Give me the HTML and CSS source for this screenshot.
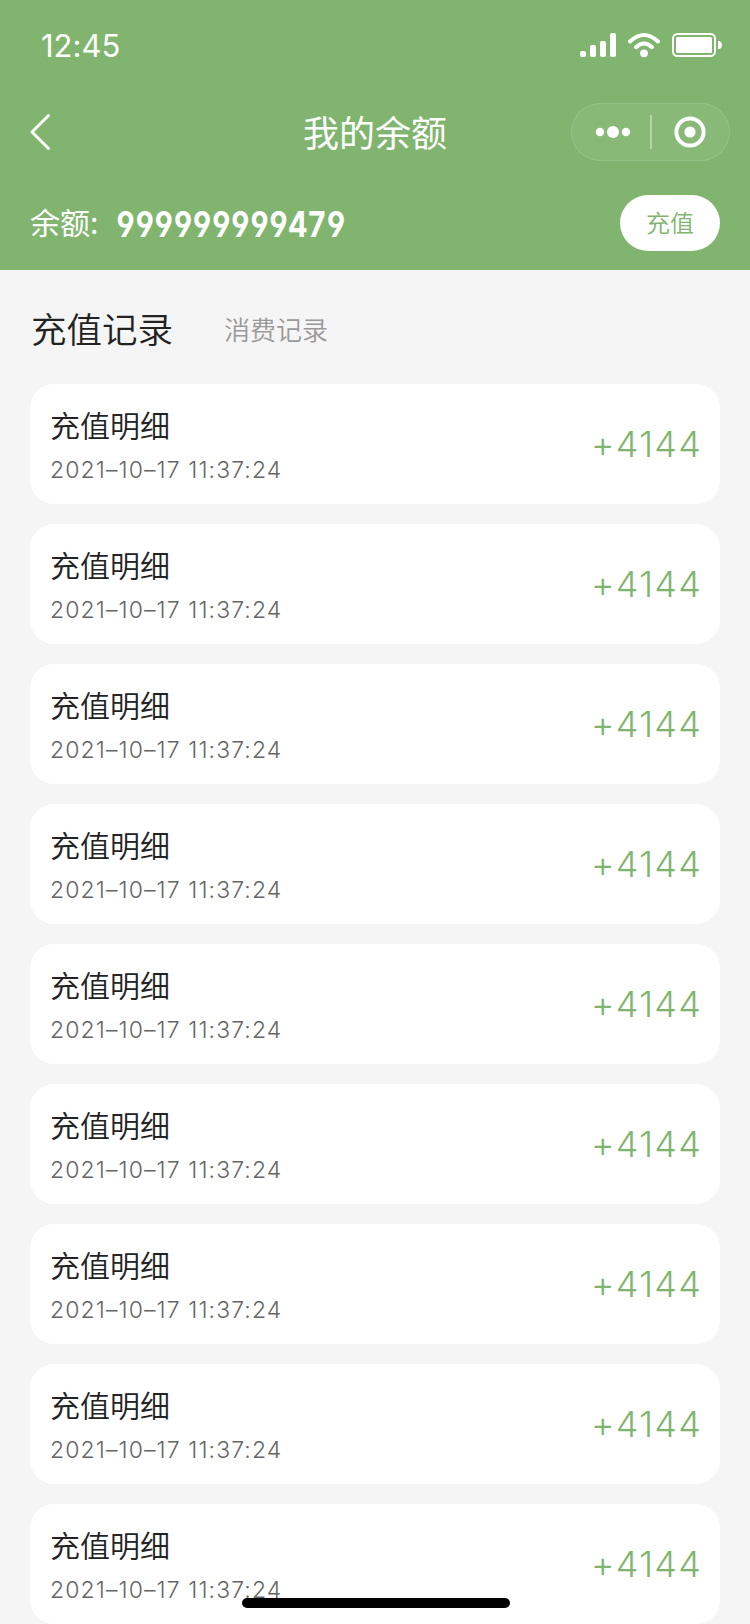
FILE: index.html
```html
<!DOCTYPE html>
<html lang="zh-CN">
<head>
<meta charset="UTF-8">
<meta name="viewport" content="width=device-width, initial-scale=1.0">
<title>我的余额</title>
<link rel="stylesheet" href="styles.css">
</head>
<body>

<header class="header">
  <div class="status-bar">
    <span class="time">12:45</span>
    <svg class="status-icons" width="144" height="26" viewBox="0 0 144 26" fill="none">
      <!-- signal -->
      <g fill="#fff">
        <rect x="1" y="19" width="6" height="6" rx="2"/>
        <rect x="11" y="13" width="6" height="12" rx="2"/>
        <rect x="21" y="9" width="6" height="16" rx="2"/>
        <rect x="31" y="1" width="6" height="24" rx="2"/>
      </g>
      <!-- wifi -->
      <path d="M51 9.5Q65 -3.5 79 9.5M57 15.2Q65 7.8 73 15.2" stroke="#fff" stroke-width="4" stroke-linecap="round"/>
      <circle cx="65" cy="21.3" r="3.9" fill="#fff"/>
      <!-- battery -->
      <rect x="94" y="2" width="42" height="22" rx="4.5" stroke="#fff" stroke-width="2"/>
      <rect x="97" y="5" width="36" height="16" rx="1.5" fill="#fff"/>
      <path d="M139 9h1.5q2.5 1 2.5 4t-2.5 4H139z" fill="#fff"/>
    </svg>
  </div>

  <div class="nav-bar">
    <svg class="back" width="24" height="40" viewBox="0 0 24 40" fill="none">
      <path d="M19.5 3.5L3 20L19.5 36.5" stroke="#fff" stroke-width="3" stroke-linecap="round" stroke-linejoin="round"/>
    </svg>
    <h1 class="title">我的余额</h1>
    <div class="capsule">
      <svg width="36" height="14" viewBox="0 0 36 14" fill="#fff">
        <circle cx="5" cy="7" r="4.2"/>
        <circle cx="18" cy="7" r="6"/>
        <circle cx="31" cy="7" r="4.2"/>
      </svg>
      <i class="divider"></i>
      <svg width="32" height="32" viewBox="0 0 32 32" fill="none">
        <circle cx="16" cy="16" r="13.6" stroke="#fff" stroke-width="4"/>
        <circle cx="16" cy="16" r="5.6" fill="#fff"/>
      </svg>
    </div>
  </div>

  <div class="balance">
    <span class="balance-label">余额:</span>
    <span class="balance-num">999999999479</span>
    <button class="recharge">充值</button>
  </div>
</header>

<nav class="tabs">
  <span class="tab active">充值记录</span>
  <span class="tab">消费记录</span>
</nav>

<main class="list">
  <div class="item">
    <div class="info">
      <p class="name">充值明细</p>
      <p class="date">2021–10–17 11:37:24</p>
    </div>
    <span class="amount">+4144</span>
  </div>
  <div class="item">
    <div class="info">
      <p class="name">充值明细</p>
      <p class="date">2021–10–17 11:37:24</p>
    </div>
    <span class="amount">+4144</span>
  </div>
  <div class="item">
    <div class="info">
      <p class="name">充值明细</p>
      <p class="date">2021–10–17 11:37:24</p>
    </div>
    <span class="amount">+4144</span>
  </div>
  <div class="item">
    <div class="info">
      <p class="name">充值明细</p>
      <p class="date">2021–10–17 11:37:24</p>
    </div>
    <span class="amount">+4144</span>
  </div>
  <div class="item">
    <div class="info">
      <p class="name">充值明细</p>
      <p class="date">2021–10–17 11:37:24</p>
    </div>
    <span class="amount">+4144</span>
  </div>
  <div class="item">
    <div class="info">
      <p class="name">充值明细</p>
      <p class="date">2021–10–17 11:37:24</p>
    </div>
    <span class="amount">+4144</span>
  </div>
  <div class="item">
    <div class="info">
      <p class="name">充值明细</p>
      <p class="date">2021–10–17 11:37:24</p>
    </div>
    <span class="amount">+4144</span>
  </div>
  <div class="item">
    <div class="info">
      <p class="name">充值明细</p>
      <p class="date">2021–10–17 11:37:24</p>
    </div>
    <span class="amount">+4144</span>
  </div>
  <div class="item">
    <div class="info">
      <p class="name">充值明细</p>
      <p class="date">2021–10–17 11:37:24</p>
    </div>
    <span class="amount">+4144</span>
  </div>
</main>

<div class="home-indicator"></div>

</body>
</html>
```

FILE: styles.css
```css
* {
  box-sizing: border-box;
}

body {
  margin: 0;
  height: 1624px;
  overflow: hidden;
  background-color: #f5f5f5;
  color: #222;
  font-family: "Noto Sans CJK SC", sans-serif;
  font-weight: 350;
}

p, h1 {
  margin: 0;
}

.header {
  height: 270px;
  background-color: #81b56f;
  color: #fff;
}

.status-bar {
  height: 88px;
  padding: 2px 27px 0 41px;
  display: flex;
  justify-content: space-between;
  align-items: center;
}

.time {
  padding-top: 2px;
  font-family: Inter, sans-serif;
  font-size: 31px;
  font-weight: 400;
  font-feature-settings: "calt" 0;
  line-height: 36px;
}

.nav-bar {
  height: 88px;
  padding: 0 20px 0 29px;
  display: grid;
  grid-template-columns: 158px 1fr 159px;
  align-items: center;
}

.title {
  padding: 0 8px 3px 0;
  font-size: 36px;
  font-weight: 400;
  line-height: 50px;
  text-align: center;
}

.capsule {
  width: 159px;
  height: 58px;
  padding: 0 22px 0 23px;
  display: flex;
  align-items: center;
  border: 1px solid rgba(255, 255, 255, 0.12);
  border-radius: 29px;
  background-color: rgba(255, 255, 255, 0.06);
}

.divider {
  width: 2px;
  height: 34px;
  margin: 0 21.5px 0 19px;
  background-color: rgba(255, 255, 255, 0.4);
}

.balance {
  height: 94px;
  padding: 0 30px;
  display: flex;
  align-items: center;
}

.balance-label {
  width: 86px;
  padding-bottom: 4px;
  font-size: 30px;
  font-weight: 400;
  line-height: 44px;
}

.balance-num {
  padding-top: 2px;
  font-family: Inter, sans-serif;
  font-size: 36px;
  font-weight: 700;
  font-feature-settings: "tnum", "cv04";
  line-height: 44px;
  transform: scaleX(0.822);
  transform-origin: left center;
}

.recharge {
  width: 100px;
  height: 56px;
  margin-left: auto;
  padding: 0 0 3px;
  border: none;
  border-radius: 28px;
  background-color: #fff;
  color: #81b56f;
  font-family: inherit;
  font-size: 24px;
  font-weight: 350;
}

.tabs {
  height: 114px;
  padding: 0 31px;
  display: flex;
  align-items: center;
  gap: 51px;
}

.tab {
  padding-top: 3px;
  font-size: 26px;
  line-height: 38px;
  color: #999;
}

.tab.active {
  padding-top: 2px;
  font-size: 35.5px;
  line-height: 50px;
  color: #222;
}

.list {
  padding: 0 30px;
  display: flex;
  flex-direction: column;
  gap: 20px;
}

.item {
  height: 120px;
  padding: 0 20px;
  display: flex;
  justify-content: space-between;
  align-items: center;
  border-radius: 24px;
  background-color: #fff;
}

.info {
  padding-top: 7px;
}

.name {
  font-size: 30px;
  line-height: 44px;
}

.date {
  font-family: Inter, sans-serif;
  font-size: 23px;
  font-weight: 350;
  font-feature-settings: "calt" 0;
  letter-spacing: 1.1px;
  line-height: 48px;
  color: #666;
}

.amount {
  margin-right: -2px;
  font-family: Inter, sans-serif;
  font-size: 36px;
  font-weight: 350;
  font-feature-settings: "calt" 0;
  letter-spacing: 1.2px;
  color: #81b56f;
}

.home-indicator {
  position: absolute;
  left: 242px;
  top: 1598px;
  width: 268px;
  height: 10px;
  border-radius: 5px;
  background-color: #000;
}
```
